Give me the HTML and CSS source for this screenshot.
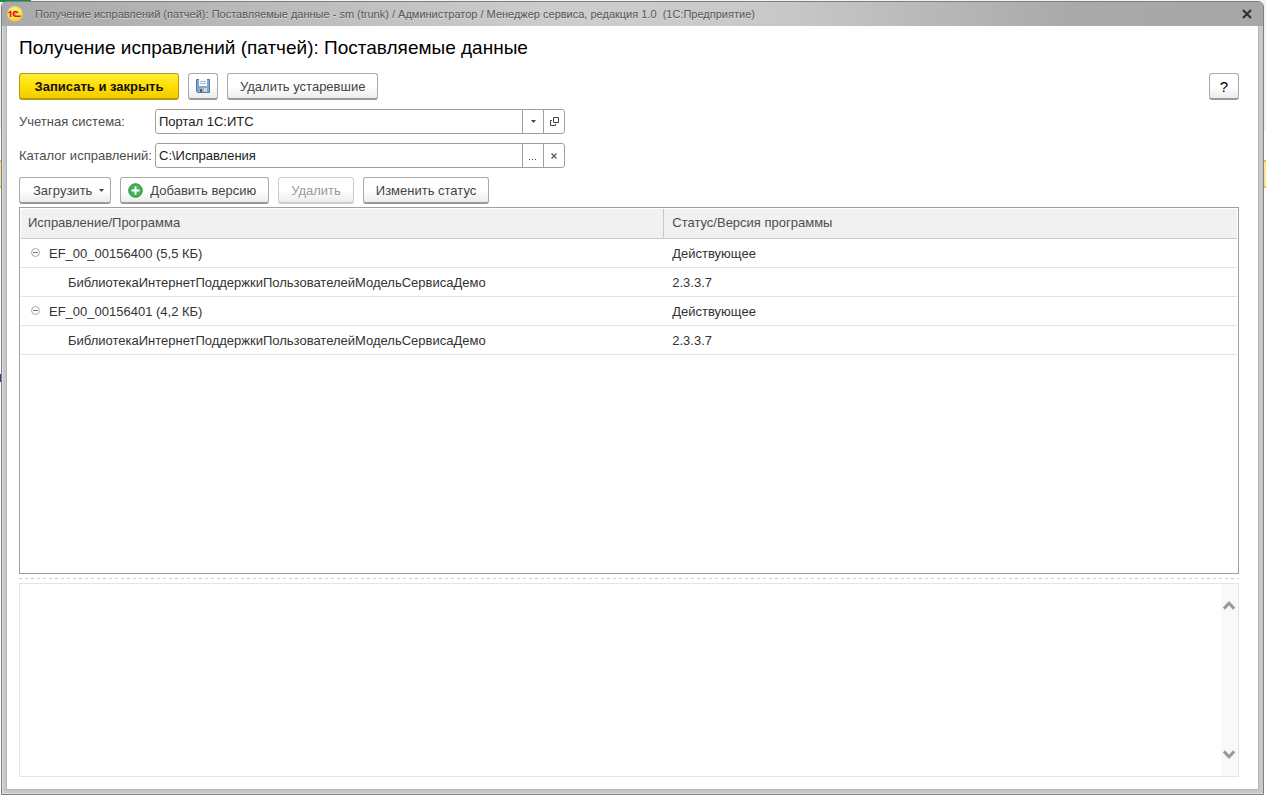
FILE: index.html
```html
<!DOCTYPE html>
<html lang="ru">
<head>
<meta charset="utf-8">
<title>Получение исправлений (патчей)</title>
<link rel="stylesheet" href="styles.css">
</head>
<body>
<div class="window">
  <header class="titlebar">
    <svg class="logo" width="16" height="16" viewBox="0 0 16 16" aria-hidden="true">
      <defs><radialGradient id="lg" cx=".45" cy=".35" r=".7"><stop offset="0" stop-color="#fff59a"/><stop offset=".6" stop-color="#fbe04a"/><stop offset="1" stop-color="#f0b93a"/></radialGradient></defs>
      <circle cx="8" cy="8" r="7.8" fill="url(#lg)"/>
      <path d="M1.6 6.8 3.6 5.6V11" fill="none" stroke="#d8191c" stroke-width="1.5"/>
      <path d="M10.8 6.8A2.4 2.4 0 1 0 8.6 10.3H13.6" fill="none" stroke="#d8191c" stroke-width="1.6"/>
      <path d="M9.6 7.4A1 1 0 1 0 9.2 8.8" fill="none" stroke="#d8191c" stroke-width=".6"/>
    </svg>
    <span class="caption">Получение исправлений (патчей): Поставляемые данные - sm (trunk) / Администратор / Менеджер сервиса, редакция 1.0 &nbsp;(1С:Предприятие)</span>
    <button class="close" aria-label="Закрыть"><svg width="10" height="10" viewBox="0 0 10 10"><path d="M1 1 9 9M9 1 1 9" stroke="#333" stroke-width="2.2"/></svg></button>
  </header>
  <main class="content">
    <h1>Получение исправлений (патчей): Поставляемые данные</h1>
    <div class="bar commands">
      <button class="btn primary">Записать и закрыть</button>
      <button class="btn icon" aria-label="Записать">
        <svg width="14" height="14" viewBox="0 0 14 14">
          <path d="M.5.5h13v13h-12l-1-1z" fill="#7fa9d4" stroke="#527aa3"/>
          <path d="M3 0h8v7H3z" fill="#f7fafc"/><path d="M4 2.5h6M4 4.5h6" stroke="#a9b8c5"/>
          <path d="M3 9h8v4H3z" fill="#a8b4bc"/><path d="M4 10h2v3H4z" fill="#4d6478"/><path d="M8 9h3v4H8z" fill="#d0d5d6"/>
        </svg>
      </button>
      <button class="btn">Удалить устаревшие</button>
      <button class="btn icon help">?</button>
    </div>
    <div class="fields">
      <label for="system">Учетная система:</label>
      <div class="field">
        <input id="system" type="text" value="Портал 1С:ИТС">
        <button aria-label="Выбрать"><svg width="5" height="3" viewBox="0 0 5 3"><path d="M0 0h5L2.5 3z" fill="#444"/></svg></button>
        <button aria-label="Открыть"><svg width="9" height="9" viewBox="0 0 9 9"><path d="M3.5.5h5v5h-5zM2 3.5H.5v5h5V7" fill="none" stroke="#444"/></svg></button>
      </div>
      <label for="folder">Каталог исправлений:</label>
      <div class="field">
        <input id="folder" type="text" value="C:\Исправления">
        <button aria-label="Обзор"><svg width="8" height="8" viewBox="0 0 8 8"><path d="M0 7h1v1H0zM3 7h1v1H3zM6 7h1v1H6z" fill="#444"/></svg></button>
        <button aria-label="Очистить"><svg width="6" height="6" viewBox="0 0 6 6"><path d="M.5.5l5 5M5.5.5l-5 5" stroke="#555" stroke-width="1.2"/></svg></button>
      </div>
    </div>
    <div class="bar tools">
      <button class="btn menu">Загрузить<svg width="5" height="3" viewBox="0 0 5 3"><path d="M0 0h5L2.5 3z" fill="#444"/></svg></button>
      <button class="btn add"><svg width="15" height="15" viewBox="0 0 15 15"><circle cx="7.5" cy="7.5" r="6.8" fill="#43b254" stroke="#2b8f3c"/><path d="M7.5 3.5v8M3.5 7.5h8" stroke="#fff" stroke-width="2"/></svg>Добавить версию</button>
      <button class="btn" disabled>Удалить</button>
      <button class="btn">Изменить статус</button>
    </div>
    <div class="list">
      <table>
        <thead><tr><th class="name">Исправление/Программа</th><th>Статус/Версия программы</th></tr></thead>
        <tbody>
          <tr><td><button class="node" aria-label="Свернуть"><svg width="9" height="9" viewBox="0 0 9 9"><circle cx="4.5" cy="4.5" r="4" fill="#fff" stroke="#aaa"/><path d="M2 4.5h5" stroke="#777"/></svg></button>EF_00_00156400 (5,5 КБ)</td><td>Действующее</td></tr>
          <tr><td class="child">БиблиотекаИнтернетПоддержкиПользователейМодельСервисаДемо</td><td>2.3.3.7</td></tr>
          <tr><td><button class="node" aria-label="Свернуть"><svg width="9" height="9" viewBox="0 0 9 9"><circle cx="4.5" cy="4.5" r="4" fill="#fff" stroke="#aaa"/><path d="M2 4.5h5" stroke="#777"/></svg></button>EF_00_00156401 (4,2 КБ)</td><td>Действующее</td></tr>
          <tr><td class="child">БиблиотекаИнтернетПоддержкиПользователейМодельСервисаДемо</td><td>2.3.3.7</td></tr>
        </tbody>
      </table>
    </div>
    <div class="splitter"></div>
    <section class="details">
      <div class="scroll">
        <button aria-label="Вверх"><svg width="12" height="9" viewBox="0 0 12 9"><path d="M.8 7.6 6 2.2l5.2 5.4" fill="none" stroke="#999" stroke-width="3"/></svg></button>
        <button aria-label="Вниз"><svg width="12" height="9" viewBox="0 0 12 9"><path d="M.8 1.4 6 6.8l5.2-5.4" fill="none" stroke="#999" stroke-width="3"/></svg></button>
      </div>
    </section>
  </main>
</div>
</body>
</html>
```
FILE: styles.css
```css
* { box-sizing: border-box; }
body {
  margin: 0;
  padding: 1px 2px 1px 1px;
  height: 100vh;
  display: flex;
  background:
    linear-gradient(#0b9048, #0b9048) 0 0 / 31px 2px no-repeat,
    linear-gradient(#55308a, #55308a) 0 374px / 1px 8px no-repeat,
    linear-gradient(#f2f2f2 0 130px, #fff 130px 160px, #f5bd20 160px 162px, #fbe49a 162px 186px, #f5bd20 186px 188px, #fff 188px);
  font-family: "Liberation Sans", Arial, sans-serif;
  font-size: 13px;
  color: #333;
}
button, input { font: inherit; color: inherit; margin: 0; }
button { display: flex; align-items: center; justify-content: center; padding: 0; border: 0; background: none; }
svg { display: block; flex: none; }
.window {
  flex: 1;
  min-width: 0;
  display: flex;
  flex-direction: column;
  border: 1px solid #7d7f80;
  border-radius: 6px 6px 0 0;
  background: #c6c8ca;
  padding: 0 4px 4px 5px;
  box-shadow: inset 1px -1px #dcdedf;
}
.titlebar {
  display: flex;
  align-items: center;
  height: 24px;
  margin: 0 -4px 0 -5px;
  padding: 0 11px 0 5px;
  border-radius: 5px 5px 0 0;
  background: linear-gradient(90deg, #a8a9ab, #b5b6b7 15%, #cdcdcd 45%, #c8c8c8 62%, #a8a9ab 85%, #a6a7a9);
}
.caption { margin-left: 12px; font-size: 11px; color: #555; text-shadow: 0 1px #ddd; white-space: nowrap; }
.close { margin-left: auto; }
.content {
  flex: 1;
  min-height: 0;
  display: flex;
  flex-direction: column;
  padding: 10px 19px 12px 12px;
  background: #fff;
  border: 1px solid #b2b4b6;
  border-width: 0 1px 1px 0;
  box-shadow: -1px 0 #b2b4b6;
}
h1 { margin: 0 0 14px; font-size: 19px; line-height: 23px; font-weight: 400; color: #000; }
.bar { display: flex; gap: 9px; }
.btn {
  height: 27px;
  padding: 0 12px;
  border: 1px solid #aaa;
  border-bottom: 2px solid #999;
  border-radius: 3px;
  background: linear-gradient(#fff 50%, #ececec);
  color: #444;
  white-space: nowrap;
}
.primary { min-width: 160px; border-color: #b39d0a; background: linear-gradient(#ffec3d, #ffdf00 50%, #f2cc00); color: #111; font-weight: 700; }
.icon { width: 30px; padding: 0; }
.help { margin-left: auto; color: #000; font-size: 15px; }
.btn:disabled { color: #999; border-color: #ccc; }
.menu { padding: 0 6px 0 13px; gap: 7px; }
.add { padding-left: 7px; gap: 7px; }
.fields {
  display: grid;
  grid-template-columns: 130px 410px;
  gap: 9px 6px;
  align-items: center;
  margin: 9px 0;
  color: #4d4d4d;
}
.fields label { white-space: nowrap; }
.field { display: flex; height: 25px; border: 1px solid #a0a0a0; border-radius: 3px; color: #222; }
.field input { flex: 1; min-width: 0; padding: 0 3px; border: 0; background: none; outline: 0; }
.field button { width: 21px; border-left: 1px solid #a0a0a0; }
.list { flex: 1; min-height: 150px; margin-top: 3px; padding: 1px; border: 1px solid #a0a0a0; overflow: hidden; }
table { width: 100%; border-collapse: separate; border-spacing: 0; table-layout: fixed; }
th { height: 30px; padding: 0 8px 2px; background: #f1f1f1; border-bottom: 1px solid #c8c8c8; font-weight: 400; text-align: left; color: #4d4d4d; }
.name { width: 53%; padding-left: 7px; border-right: 1px solid #c8c8c8; }
td { height: 29px; padding: 0 8px; border-bottom: 1px solid #e3e3e3; }
th.name { width: 52.9%; }
td:first-child { padding-left: 10px; }
td.child:first-child { padding-left: 47px; }
.node { display: inline-flex; margin-right: 9px; vertical-align: 1px; }
.splitter { height: 9px; padding-top: 4px; }
.splitter::before { content: ""; display: block; height: 1px; background: repeating-linear-gradient(90deg, #ccc 0 3px, transparent 3px 6px); }
.details { display: flex; justify-content: flex-end; height: 194px; border: 1px solid #e5e5e5; }
.scroll { display: flex; flex-direction: column; justify-content: space-between; width: 17px; padding: 17px 1px 17px 0; background: #f9f9f9; }
```
